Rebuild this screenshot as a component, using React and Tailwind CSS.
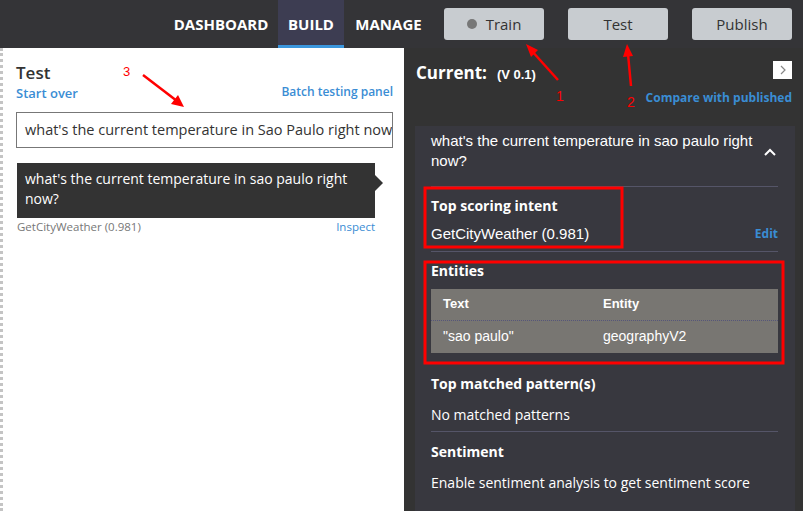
const SEGOE = { fontFamily: '"Open Sans", "Noto Sans", sans-serif' }
const ARIAL = { fontFamily: '"Liberation Sans", Arial, sans-serif' }

function NavTab({ label, active, width }) {
  return (
    <div
      className={`flex items-center justify-center h-full text-[15px] font-bold text-white ${width} ${
        active ? 'bg-[#3d3d52] border-b-[3px] border-[#3a96dd] pt-[3px]' : ''
      }`}
    >
      {label}
    </div>
  )
}

function TopButton({ children }) {
  return (
    <button className="w-[100px] h-[32px] rounded-[3px] bg-[#c8ccd0] text-[15px] text-[#333] flex items-center justify-center gap-[9px]">
      {children}
    </button>
  )
}

function Annotations() {
  return (
    <>
      <svg className="absolute inset-0 pointer-events-none" width="803" height="511">
        {/* arrows */}
        <g stroke="#f00" strokeWidth="2.5" fill="#f00">
          <line x1="558" y1="80" x2="531" y2="50" />
          <polygon points="526,44 538,50 531,57" stroke="none" />
          <line x1="631" y1="86" x2="628" y2="54" />
          <polygon points="627,44 633,56 623,57" stroke="none" />
          <line x1="143" y1="75" x2="177" y2="101" />
          <polygon points="184,107 171,104 178,95" stroke="none" />
        </g>
        {/* boxes */}
        <rect x="425" y="188" width="197" height="59" fill="none" stroke="#f00" strokeWidth="3" />
        <rect x="425" y="262" width="358" height="101" fill="none" stroke="#f00" strokeWidth="3" />
      </svg>
      <span className="absolute left-[123px] top-[62px] text-[13px] text-[#f00]" style={ARIAL}>3</span>
      <span className="absolute left-[556px] top-[86px] text-[14px] text-[#f00]" style={ARIAL}>1</span>
      <span className="absolute left-[627px] top-[92px] text-[14px] text-[#f00]" style={ARIAL}>2</span>
    </>
  )
}

export default function App() {
  return (
    <div className="relative w-[803px] h-[511px] overflow-hidden bg-[#333333]" style={SEGOE}>
      {/* header */}
      <div className="h-[48px] flex justify-end items-stretch bg-[#343437] pr-[11px]">
        <NavTab label="DASHBOARD" width="w-[114px]" />
        <NavTab label="BUILD" width="w-[66px]" active />
        <NavTab label="MANAGE" width="w-[89px]" />
        <div className="flex items-start gap-[24px] pt-[8px] ml-[11px]">
          <TopButton>
            <span className="w-[10px] h-[10px] rounded-full bg-[#777]" />
            <span>Train</span>
          </TopButton>
          <TopButton>Test</TopButton>
          <TopButton>Publish</TopButton>
        </div>
      </div>

      <div className="flex h-[463px]">
        {/* left test panel */}
        <div className="w-[404px] bg-white border-l-[3px] border-dotted border-[#c4c4c4] pl-[13px] pr-[11px]">
          <div className="flex justify-between items-end pt-[14px]">
            <div>
              <div className="text-[17px] font-semibold text-[#333] leading-[22px]">Test</div>
              <div className="text-[13px] font-semibold text-[#3a8dd4] leading-[18px]">Start over</div>
            </div>
            <div className="text-[12px] font-semibold text-[#3a8dd4] leading-[18px] mb-[1px]">Batch testing panel</div>
          </div>
          <div className="mt-[10px] h-[36px] border border-[#777] flex items-center pl-[8px] overflow-hidden whitespace-nowrap text-[14.5px] text-[#333]">
            what's the current temperature in Sao Paulo right now?
          </div>
          <div className="mt-[15px] w-[358px] ml-[1px] relative">
            <div className="bg-[#333] text-white text-[14px] leading-[20px] px-[8px] pt-[6px] pb-[9px]">
              what's the current temperature in sao paulo right now?
            </div>
            <div className="absolute right-[-8px] top-[12px] w-0 h-0 border-y-[8px] border-y-transparent border-l-[8px] border-l-[#333]" />
          </div>
          <div className="w-[358px] ml-[1px] flex justify-between items-center text-[11.5px] leading-[16px] mt-[1px]">
            <span className="text-[#777]">GetCityWeather (0.981)</span>
            <span className="text-[#3a8dd4]">Inspect</span>
          </div>
        </div>

        {/* right result panel */}
        <div className="flex-1 flex flex-col">
          <div className="h-[78px] pl-[12px] pr-[11px] pt-[12px] relative">
            <div className="flex items-baseline gap-[10px] text-white">
              <span className="text-[17px] font-bold">Current:</span>
              <span className="text-[13px] font-bold" style={ARIAL}>(V 0.1)</span>
            </div>
            <div className="absolute right-[11px] top-[13px] w-[19px] h-[18px] bg-white flex items-center justify-center">
              <svg width="8" height="10" viewBox="0 0 8 10">
                <polyline points="2,1 6,5 2,9" fill="none" stroke="#888" strokeWidth="1.2" />
              </svg>
            </div>
            <div className="absolute right-[11px] top-[41px] text-[12px] font-bold text-[#3a8dd4]">Compare with published</div>
          </div>

          <div className="flex-1 ml-[11px] mr-[8px] bg-[#38383f] pl-[16px] pr-[17px]">
            <div className="flex justify-between items-start pt-[5px] pb-[15px] border-b border-[#555568]">
              <div className="text-[15px] leading-[20px] text-white w-[330px]" style={ARIAL}>
                what's the current temperature in sao paulo right now?
              </div>
              <svg width="12" height="8" viewBox="0 0 12 8" className="mt-[17px] mr-[2px]">
                <polyline points="1,7 6,2 11,7" fill="none" stroke="#fff" strokeWidth="2" />
              </svg>
            </div>

            <div className="pt-[8px] pb-[5px] border-b border-[#555568]">
              <div className="text-[14px] font-bold text-white leading-[22px]">Top scoring intent</div>
              <div className="flex justify-between items-center mt-[6px]">
                <span className="text-[15px] text-white" style={ARIAL}>GetCityWeather (0.981)</span>
                <span className="text-[12px] font-bold text-[#3a8dd4]">Edit</span>
              </div>
            </div>

            <div className="pt-[9px]">
              <div className="text-[14px] font-bold text-white leading-[20px]">Entities</div>
              <div className="mt-[8px] bg-[#787672] text-white text-[13px]" style={ARIAL}>
                <div className="flex h-[32px] items-center border-b border-dotted border-[#55557a] font-bold">
                  <span className="w-[172px] pl-[12px]">Text</span>
                  <span>Entity</span>
                </div>
                <div className="flex h-[32px] items-center text-[14px]">
                  <span className="w-[172px] pl-[12px]">"sao paulo"</span>
                  <span>geographyV2</span>
                </div>
              </div>
            </div>

            <div className="pt-[20px] pb-[5px] border-b border-[#555568]">
              <div className="text-[14px] font-bold text-white leading-[22px]">Top matched pattern(s)</div>
              <div className="text-[14px] text-white leading-[22px] mt-[9px]">No matched patterns</div>
            </div>

            <div className="pt-[9px]">
              <div className="text-[14px] font-bold text-white leading-[22px]">Sentiment</div>
              <div className="text-[14px] text-white leading-[22px] mt-[9px]">Enable sentiment analysis to get sentiment score</div>
            </div>
          </div>
        </div>
      </div>

      <Annotations />
    </div>
  )
}
